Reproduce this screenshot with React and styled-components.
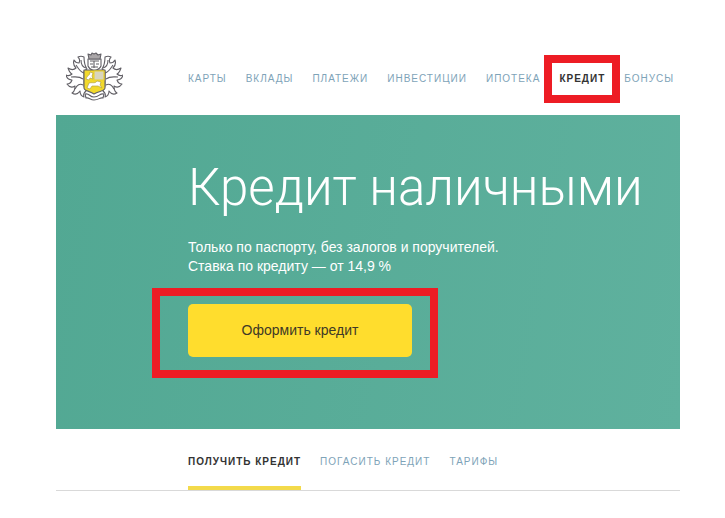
import React from 'react';
import styled, { createGlobalStyle, css } from 'styled-components';

const menu = ['Карты', 'Вклады', 'Платежи', 'Инвестиции', 'Ипотека', 'Кредит', 'Бонусы'];
const tabs = ['Получить кредит', 'Погасить кредит', 'Тарифы'];

function Mantling() {
  return (
    <g>
      <path
        className="white"
        d="M21 17 C19 14 18 10 18 5 C16 4 14 4 12 5 C14 7 14 9 13 11 C11 11 9 10 8 8 C7 11 8 14 10 16 C8 18 5 18 2 16 C3 19 4 21 6 22 C4 24 2 24 0 23 C1 27 3 28 6 28 C5 31 3 32 1 32 C3 35 6 36 9 34 C9 37 8 40 6 41 C9 43 12 42 14 39 C14 42 15 44 18 45 C17 42 18 41 20 39 L18 34 V19 Z"
      />
      <path d="M20 16 C16 15 15 12 15 8 M18 21 C14 20 12 16 10 13 M17 27 C13 24 10 25 5 25 M17 33 C14 31 11 33 9 37" />
    </g>
  );
}

function Emblem() {
  return (
    <EmblemSvg viewBox="0 0 57 50" role="img" aria-label="Герб">
      <Mantling />
      <g transform="translate(57 0) scale(-1 1)">
        <Mantling />
      </g>
      <path className="white" d="M22 7 H35 V14 C34 17 31 18 28 19 C26 18 23 17 22 14 Z" />
      <path d="M24 9 H33 M24 12 H27 M30 12 H33 M28 9 V16 M25 15 H32" />
      <path className="solid" d="M23 7 L22 2 L25 3 L26 1 L28 2 L30 1 L32 3 L35 2 L34 7 Z" />
      <path className="gold" d="M18 18 H39 V36 C39 39 33 39 28 42 C24 39 18 39 18 36 Z" />
      <path className="pale" d="M28 19 H38 V28 H28 Z" />
      <path className="lion" d="M20 27 C21 23 24 24 24 20 L27 21 L26 24 L27 27 L24 26 L23 28 Z" />
      <path className="lion" d="M21 36 L23 31 C26 30 29 32 31 29 L35 30 L34 33 L36 36 L32 34 L26 34 L24 37 Z" />
      <path className="white" d="M19 42 C24 41 23 45 28 45 C34 45 33 41 38 42 L37 46 C34 45 33 48 28 48 C24 48 23 45 20 46 Z" />
    </EmblemSvg>
  );
}

function App() {
  return (
    <Page>
      <GlobalStyle />
      <Header>
        <Logo href="#">
          <Emblem />
        </Logo>
        <Menu aria-label="Разделы">
          {menu.map(item => (
            <MenuLink key={item} href="#" $active={item === 'Кредит'}>
              {item}
            </MenuLink>
          ))}
        </Menu>
      </Header>
      <Hero>
        <Title>Кредит наличными</Title>
        <Lead>
          Только по паспорту, без залогов и поручителей.
          <br />
          Ставка по кредиту — от 14,9 %
        </Lead>
        <Action>
          <ApplyButton type="button">Оформить кредит</ApplyButton>
        </Action>
      </Hero>
      <Tabs aria-label="О кредите">
        {tabs.map((tab, index) => (
          <Tab key={tab} href="#" $active={index === 0}>
            {tab}
          </Tab>
        ))}
      </Tabs>
    </Page>
  );
}

export default App;

const GlobalStyle = createGlobalStyle`
  * {
    box-sizing: border-box;
  }

  body {
    margin: 0;
    background: #ffffff;
    font-family: "Liberation Sans", Arial, sans-serif;
  }
`;

const Page = styled.div`
  padding: 43px 45px 0 56px;
`;

const Header = styled.header`
  display: grid;
  grid-template-columns: 132px 1fr;
  align-items: center;
  height: 72px;
`;

const Logo = styled.a`
  display: block;
  margin: 0 0 4px 10px;
  line-height: 0;
`;

const EmblemSvg = styled.svg`
  width: 57px;
  height: 50px;
  fill: none;
  stroke: #626066;
  stroke-width: 1.1;
  stroke-linejoin: round;

  .solid {
    fill: #aaa6a8;
  }

  .white {
    fill: #ffffff;
  }

  .gold {
    fill: #f2d92b;
  }

  .pale {
    fill: #d9d5bd;
    stroke: #e8cf2f;
  }

  .lion {
    fill: #ffffff;
    stroke: #a8973a;
    stroke-width: 0.6;
  }
`;

const Menu = styled.nav`
  display: flex;
  gap: 19px;
`;

const capsLink = css`
  color: ${props => (props.$active ? '#333333' : '#7ea3b8')};
  font-size: 10px;
  font-weight: ${props => (props.$active ? 700 : 400)};
  letter-spacing: 1px;
  line-height: 16px;
  text-decoration: none;
  text-transform: uppercase;
  white-space: nowrap;
`;

const frame = css`
  position: absolute;
  border: 8px solid #ed1c24;
  content: '';
  pointer-events: none;
`;

const MenuLink = styled.a`
  ${capsLink}
  position: relative;

  ${props =>
    props.$active &&
    css`
      &::after {
        ${frame}
        inset: -16px -15px;
      }
    `}
`;

const Hero = styled.main`
  padding: 40px 0 72px 132px;
  background: linear-gradient(100deg, #52a893, #5fb19e);
  color: #ffffff;
`;

const Title = styled.h1`
  margin: 0;
  font-family: Roboto, sans-serif;
  font-size: 51px;
  font-weight: 300;
  line-height: 66px;
  white-space: nowrap;
`;

const Lead = styled.p`
  margin: 17px 0 28px;
  font-size: 14px;
  line-height: 19px;
`;

const Action = styled.div`
  position: relative;
  width: fit-content;

  &::after {
    ${frame}
    inset: -16px -26px -21px -36px;
  }
`;

const ApplyButton = styled.button`
  display: block;
  width: 224px;
  height: 53px;
  padding: 0 0 2px;
  border: 0;
  border-radius: 5px;
  background: #ffdd2d;
  color: #403a26;
  font-family: inherit;
  font-size: 14px;
  cursor: pointer;
`;

const Tabs = styled.nav`
  display: flex;
  gap: 19px;
  padding-left: 132px;
  border-bottom: 1px solid #d9d9d9;
`;

const Tab = styled.a`
  ${capsLink}
  padding: 25px 0 16px;
  border-bottom: 4px solid ${props => (props.$active ? '#f3da4b' : 'transparent')};
`;
